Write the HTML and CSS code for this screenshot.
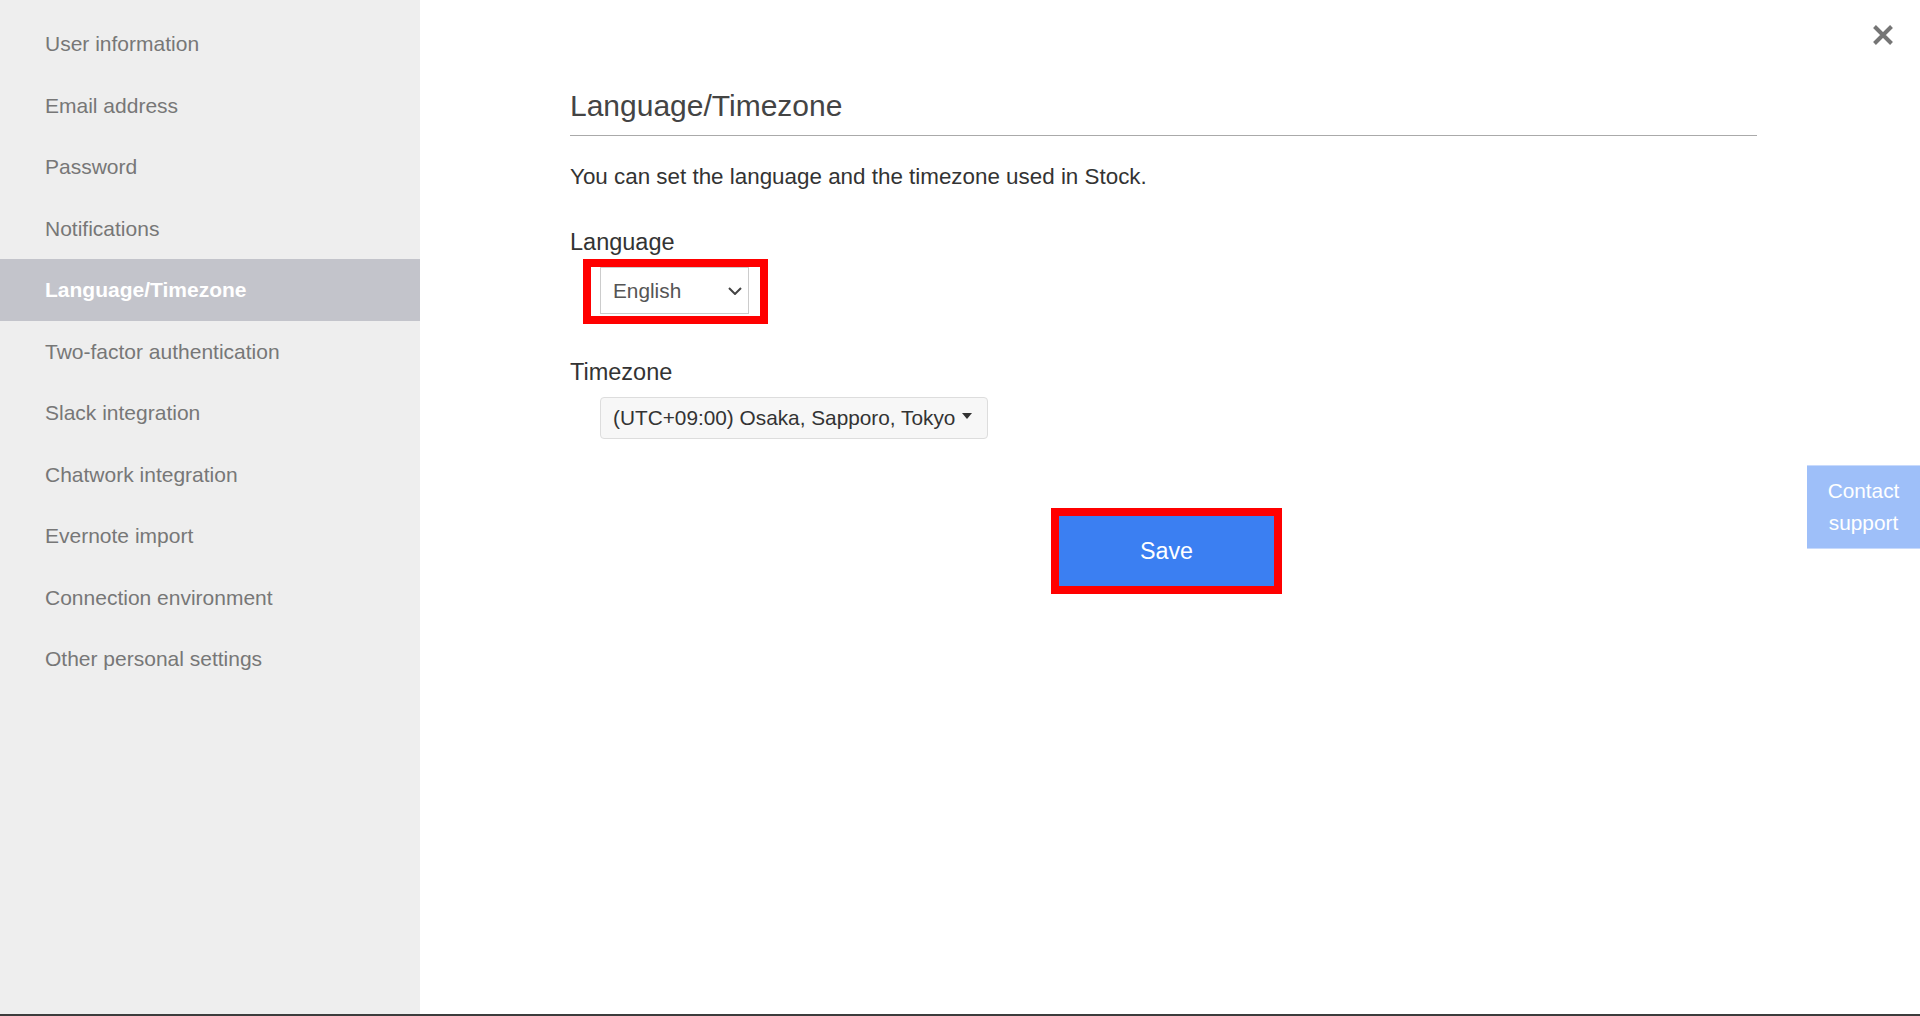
FILE: index.html
```html
<!DOCTYPE html>
<html lang="en">

<head>
    <meta charset="UTF-8">
    <meta name="viewport" content="width=device-width, initial-scale=1.0">
    <title>Language/Timezone</title>
    <link rel="stylesheet" href="styles.css">
</head>

<body>
    <div class="page">
        <!-- 左侧菜单 -->
        <nav class="side">
            <ul class="side-menu">
                <li><a href="#">User information</a></li>
                <li><a href="#">Email address</a></li>
                <li><a href="#">Password</a></li>
                <li><a href="#">Notifications</a></li>
                <li class="active"><a href="#">Language/Timezone</a></li>
                <li><a href="#">Two-factor authentication</a></li>
                <li><a href="#">Slack integration</a></li>
                <li><a href="#">Chatwork integration</a></li>
                <li><a href="#">Evernote import</a></li>
                <li><a href="#">Connection environment</a></li>
                <li><a href="#">Other personal settings</a></li>
            </ul>
        </nav>

        <!-- 右侧内容 -->
        <main class="main">
            <button class="close" type="button" aria-label="Close">
                <svg width="22" height="22" viewBox="0 0 22 22">
                    <path d="M2.5 2.5L19.5 19.5M19.5 2.5L2.5 19.5" stroke="#757575" stroke-width="4" fill="none" />
                </svg>
            </button>

            <section class="settings">
                <h1 class="settings-title">Language/Timezone</h1>
                <p class="settings-desc">You can set the language and the timezone used in Stock.</p>

                <div class="field">
                    <div class="field-label">Language</div>
                    <div class="field-control">
                        <div class="select select-lang marked">
                            <span>English</span>
                            <svg width="14" height="8" viewBox="0 0 14 8">
                                <path d="M1 1L7 7L13 1" stroke="#444" stroke-width="2" fill="none" />
                            </svg>
                        </div>
                    </div>
                </div>

                <div class="field">
                    <div class="field-label">Timezone</div>
                    <div class="field-control">
                        <div class="select select-tz">
                            <span>(UTC+09:00) Osaka, Sapporo, Tokyo</span>
                            <i class="caret"></i>
                        </div>
                    </div>
                </div>

                <div class="actions">
                    <button class="btn-save" type="button">Save</button>
                </div>
            </section>

            <a class="contact" href="#">Contact<br>support</a>
        </main>
    </div>
</body>

</html>
```

FILE: styles.css
```css
* {
    margin: 0;
    padding: 0;
    box-sizing: border-box;
}

body {
    font-family: "Liberation Sans", Arial, sans-serif;
    background: #fff;
}

li {
    list-style: none;
}

a {
    text-decoration: none;
}

.page {
    display: flex;
    height: 1016px;
    border-bottom: 2px solid #3c3c3c;
}

/* 左侧菜单 */
.side {
    width: 420px;
    background: #eeeeee;
}

.side-menu {
    padding-top: 13px;
}

.side-menu li a {
    display: block;
    height: 61.5px;
    line-height: 61.5px;
    padding-left: 45px;
    font-size: 21px;
    color: #777;
}

.side-menu li.active {
    background: #c3c4cb;
}

.side-menu li.active a {
    color: #fff;
    font-weight: bold;
}

/* 右侧内容 */
.main {
    flex: 1;
    position: relative;
    padding: 88px 163px 0 150px;
}

.close {
    position: absolute;
    top: 24px;
    right: 26px;
    width: 22px;
    height: 22px;
    border: none;
    background: none;
    cursor: pointer;
}

.close svg {
    display: block;
}

.settings-title {
    font-size: 30px;
    line-height: 36px;
    font-weight: normal;
    color: #444;
    padding-bottom: 11px;
    border-bottom: 1px solid #aaa;
}

.settings-desc {
    margin-top: 26px;
    font-size: 22.4px;
    line-height: 30px;
    color: #333;
}

.field {
    margin-top: 35px;
}

.field + .field {
    margin-top: 43px;
}

.field-label {
    font-size: 23.5px;
    line-height: 30px;
    color: #333;
}

.field-control {
    margin-top: 10px;
    padding-left: 30px;
}

.select {
    display: inline-flex;
    align-items: center;
    font-size: 20.8px;
    white-space: nowrap;
    cursor: pointer;
}

.select-lang {
    justify-content: space-between;
    width: 149px;
    height: 47px;
    padding: 0 6px 0 12px;
    background: #fff;
    border: 1px solid #ccc;
    color: #555;
}

.select-lang svg {
    display: block;
}

.select-tz {
    width: 388px;
    height: 42px;
    padding: 0 12px;
    background: #f7f7f7;
    border: 1px solid #ddd;
    border-radius: 4px;
    color: #333;
}

.caret {
    flex-shrink: 0;
    width: 0;
    height: 0;
    margin: 0 0 4px 7px;
    border-top: 6px solid #333;
    border-left: 5px solid transparent;
    border-right: 5px solid transparent;
}

/* 标注框 */
.marked {
    position: relative;
}

.marked::after {
    content: "";
    position: absolute;
    top: -9px;
    left: -18px;
    right: -20px;
    bottom: -11px;
    border: 8px solid #f00;
}

.actions {
    margin-top: 77px;
    padding-left: 6px;
    text-align: center;
}

.btn-save {
    width: 215px;
    height: 70px;
    border: none;
    background: #3b7ff2;
    color: #fff;
    font-family: inherit;
    font-size: 23.3px;
    outline: 8px solid #f00;
    cursor: pointer;
}

.contact {
    position: absolute;
    top: 465px;
    right: 0;
    width: 113px;
    padding: 9px 0;
    background: #9ebff9;
    border-top: 1px solid #c8dafc;
    border-bottom: 1px solid #c8dafc;
    color: #fff;
    font-size: 20.8px;
    line-height: 32px;
    text-align: center;
}
```
